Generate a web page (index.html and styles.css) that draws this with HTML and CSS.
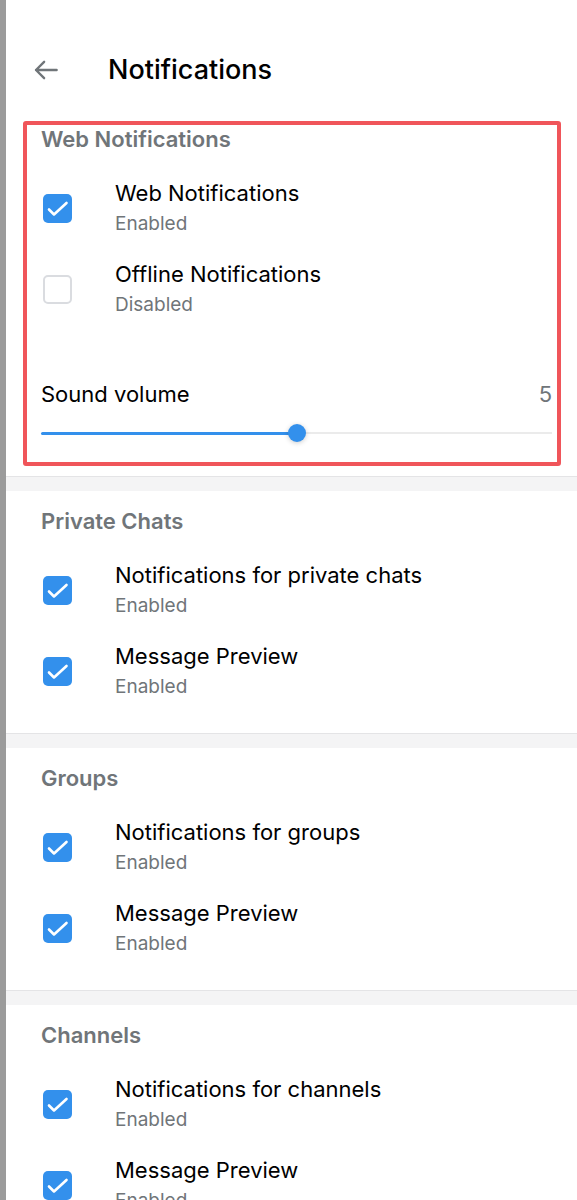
FILE: index.html
```html
<!DOCTYPE html>
<html lang="en">
<head>
  <meta charset="UTF-8" />
  <meta name="viewport" content="width=device-width, initial-scale=1.0"/>
  <title>Notifications</title>
  <link rel="stylesheet" href="styles.css">
</head>
<body>
<div class="app">
  <div class="edge"></div>

  <main class="settings">
    <header class="topbar">
      <svg class="back" width="30" height="30" viewBox="0 0 24 24" fill="none" stroke="#707579" stroke-width="1.9" stroke-linecap="round" stroke-linejoin="round">
        <path d="M20.5 12H4M10.5 5.5L4 12l6.5 6.5"/>
      </svg>
      <h1>Notifications</h1>
    </header>

    <section class="group group-marked">
      <h2 class="group-title">Web Notifications</h2>
      <div class="option">
        <span class="check"><svg width="29" height="29" viewBox="0 0 29 29" fill="none" stroke="#fff" stroke-width="2.6" stroke-linecap="round" stroke-linejoin="round"><path d="M6 15.5l5 5L23.5 9"/></svg></span>
        <div>
          <div class="option-title">Web Notifications</div>
          <div class="option-sub">Enabled</div>
        </div>
      </div>
      <div class="option">
        <span class="check off"></span>
        <div>
          <div class="option-title">Offline Notifications</div>
          <div class="option-sub">Disabled</div>
        </div>
      </div>

      <div class="volume">
        <div class="volume-head">
          <span>Sound volume</span>
          <span class="volume-value">5</span>
        </div>
        <div class="slider">
          <span class="slider-fill" style="width: 50%"></span>
          <span class="slider-knob"></span>
          <span class="slider-rest"></span>
        </div>
      </div>
    </section>

    <div class="gap"></div>

    <section class="group">
      <h2 class="group-title">Private Chats</h2>
      <div class="option">
        <span class="check"><svg width="29" height="29" viewBox="0 0 29 29" fill="none" stroke="#fff" stroke-width="2.6" stroke-linecap="round" stroke-linejoin="round"><path d="M6 15.5l5 5L23.5 9"/></svg></span>
        <div>
          <div class="option-title">Notifications for private chats</div>
          <div class="option-sub">Enabled</div>
        </div>
      </div>
      <div class="option">
        <span class="check"><svg width="29" height="29" viewBox="0 0 29 29" fill="none" stroke="#fff" stroke-width="2.6" stroke-linecap="round" stroke-linejoin="round"><path d="M6 15.5l5 5L23.5 9"/></svg></span>
        <div>
          <div class="option-title">Message Preview</div>
          <div class="option-sub">Enabled</div>
        </div>
      </div>
    </section>

    <div class="gap"></div>

    <section class="group">
      <h2 class="group-title">Groups</h2>
      <div class="option">
        <span class="check"><svg width="29" height="29" viewBox="0 0 29 29" fill="none" stroke="#fff" stroke-width="2.6" stroke-linecap="round" stroke-linejoin="round"><path d="M6 15.5l5 5L23.5 9"/></svg></span>
        <div>
          <div class="option-title">Notifications for groups</div>
          <div class="option-sub">Enabled</div>
        </div>
      </div>
      <div class="option">
        <span class="check"><svg width="29" height="29" viewBox="0 0 29 29" fill="none" stroke="#fff" stroke-width="2.6" stroke-linecap="round" stroke-linejoin="round"><path d="M6 15.5l5 5L23.5 9"/></svg></span>
        <div>
          <div class="option-title">Message Preview</div>
          <div class="option-sub">Enabled</div>
        </div>
      </div>
    </section>

    <div class="gap"></div>

    <section class="group">
      <h2 class="group-title">Channels</h2>
      <div class="option">
        <span class="check"><svg width="29" height="29" viewBox="0 0 29 29" fill="none" stroke="#fff" stroke-width="2.6" stroke-linecap="round" stroke-linejoin="round"><path d="M6 15.5l5 5L23.5 9"/></svg></span>
        <div>
          <div class="option-title">Notifications for channels</div>
          <div class="option-sub">Enabled</div>
        </div>
      </div>
      <div class="option">
        <span class="check"><svg width="29" height="29" viewBox="0 0 29 29" fill="none" stroke="#fff" stroke-width="2.6" stroke-linecap="round" stroke-linejoin="round"><path d="M6 15.5l5 5L23.5 9"/></svg></span>
        <div>
          <div class="option-title">Message Preview</div>
          <div class="option-sub">Enabled</div>
        </div>
      </div>
    </section>
  </main>
</div>
</body>
</html>
```

FILE: styles.css
```css
* {
  margin: 0;
  padding: 0;
  box-sizing: border-box;
}

body {
  font-family: Inter, "Noto Sans", sans-serif;
  background: #fff;
  color: #000;
}

.app {
  display: flex;
  min-height: 100vh;
}

.edge {
  width: 6px;
  flex-shrink: 0;
  background: #9b9b9b;
}

.settings {
  flex: 1;
}

.topbar {
  height: 109px;
  display: flex;
  align-items: center;
  padding: 30px 0 0 25px;
}

.back {
  flex-shrink: 0;
  margin-right: 47px;
}

.topbar h1 {
  font-size: 27px;
  font-weight: 500;
  line-height: 34px;
}

.group {
  position: relative;
  padding: 16px 25px 21px 35px;
}

/* red annotation frame round the first block */
.group-marked::after {
  content: '';
  position: absolute;
  top: 12px;
  left: 17px;
  right: 16px;
  bottom: 10px;
  border: 4px solid #f0555a;
  border-radius: 3px;
  pointer-events: none;
}

.group-title {
  font-size: 22px;
  font-weight: 600;
  line-height: 28px;
  color: #707579;
  margin-bottom: 15px;
}

.option {
  display: flex;
  align-items: center;
  padding: 13px 0;
}

.check {
  width: 29px;
  height: 29px;
  margin: 0 43px 0 2px;
  flex-shrink: 0;
  border-radius: 5px;
  background: #3390ec;
  display: flex;
  align-items: center;
  justify-content: center;
}

.check.off {
  background: #fff;
  border: 2px solid #dadce0;
}

.option-title {
  font-size: 22px;
  line-height: 24px;
}

.option-sub {
  font-size: 19px;
  line-height: 24px;
  color: #707579;
  margin-top: 7px;
}

.volume {
  margin: 51px 0 12px;
}

.volume-head {
  display: flex;
  justify-content: space-between;
  font-size: 22px;
  line-height: 26px;
}

.volume-value {
  color: #707579;
}

.slider {
  display: flex;
  align-items: center;
  height: 20px;
  margin-top: 16px;
}

.slider-fill {
  height: 3px;
  background: #3390ec;
  border-radius: 2px;
}

.slider-knob {
  position: relative;
  z-index: 1;
  width: 18px;
  height: 18px;
  margin: 0 -9px;
  flex-shrink: 0;
  border-radius: 50%;
  background: #3390ec;
  box-shadow: 0 1px 5px rgba(0, 0, 0, 0.2);
}

.slider-rest {
  flex: 1;
  height: 2px;
  background: #ebebeb;
}

.gap {
  height: 15px;
  background: #f4f4f5;
  border-top: 1px solid #e4e4e6;
}
```
